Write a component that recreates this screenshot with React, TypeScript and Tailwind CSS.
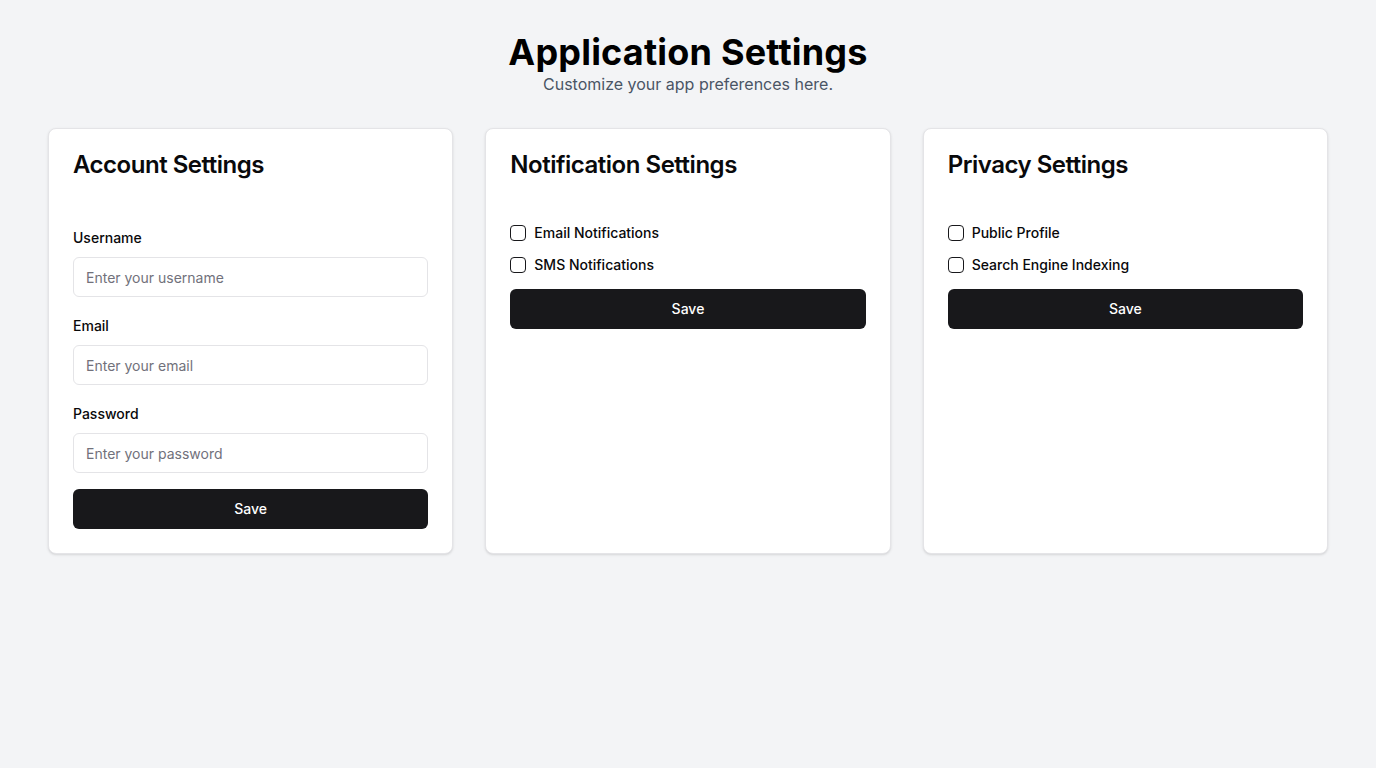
import { useState } from 'react';

function Field({ label, type, placeholder }: { label: string; type: string; placeholder: string }) {
  return (
    <div className="flex flex-col gap-3 pt-1.5">
      <label className="text-sm font-medium leading-none text-zinc-950">{label}</label>
      <input
        type={type}
        placeholder={placeholder}
        className="h-10 w-full rounded-md border border-zinc-200 bg-white px-3 text-sm text-zinc-950 placeholder:text-zinc-500 outline-none"
      />
    </div>
  );
}

function Check({ label }: { label: string }) {
  const [checked, setChecked] = useState(false);
  return (
    <label className="flex items-center gap-2 text-sm font-medium leading-none text-zinc-950">
      <input
        type="checkbox"
        checked={checked}
        onChange={() => setChecked(!checked)}
        className="h-4 w-4 appearance-none rounded-[4px] border border-zinc-900 bg-white checked:bg-zinc-900"
      />
      {label}
    </label>
  );
}

function SaveButton() {
  return (
    <button className="h-10 w-full rounded-md bg-zinc-900 text-sm font-medium text-white hover:bg-zinc-800">
      Save
    </button>
  );
}

function Card({ title, children }: { title: string; children: React.ReactNode }) {
  return (
    <div className="rounded-lg border border-zinc-200 bg-white p-6 shadow-sm">
      <h2 className="text-2xl font-semibold leading-none tracking-[-0.02em] text-zinc-950">{title}</h2>
      <div className="mt-12">{children}</div>
    </div>
  );
}

export default function App() {
  return (
    <div className="min-h-screen bg-gray-100 py-8" style={{ fontFamily: 'Inter, "Noto Sans", sans-serif' }}>
      <div className="mb-8 text-center">
        <h1 className="text-4xl font-bold tracking-[0.2px] text-black">Application Settings</h1>
        <p className="text-base text-gray-600">Customize your app preferences here.</p>
      </div>

      <div className="mx-auto grid max-w-7xl grid-cols-3 gap-8">
        <Card title="Account Settings">
          <form className="flex flex-col gap-4" onSubmit={(e) => e.preventDefault()}>
            <Field label="Username" type="text" placeholder="Enter your username" />
            <Field label="Email" type="email" placeholder="Enter your email" />
            <Field label="Password" type="password" placeholder="Enter your password" />
            <SaveButton />
          </form>
        </Card>

        <Card title="Notification Settings">
          <div className="flex flex-col gap-4">
            <Check label="Email Notifications" />
            <Check label="SMS Notifications" />
            <SaveButton />
          </div>
        </Card>

        <Card title="Privacy Settings">
          <div className="flex flex-col gap-4">
            <Check label="Public Profile" />
            <Check label="Search Engine Indexing" />
            <SaveButton />
          </div>
        </Card>
      </div>
    </div>
  );
}
